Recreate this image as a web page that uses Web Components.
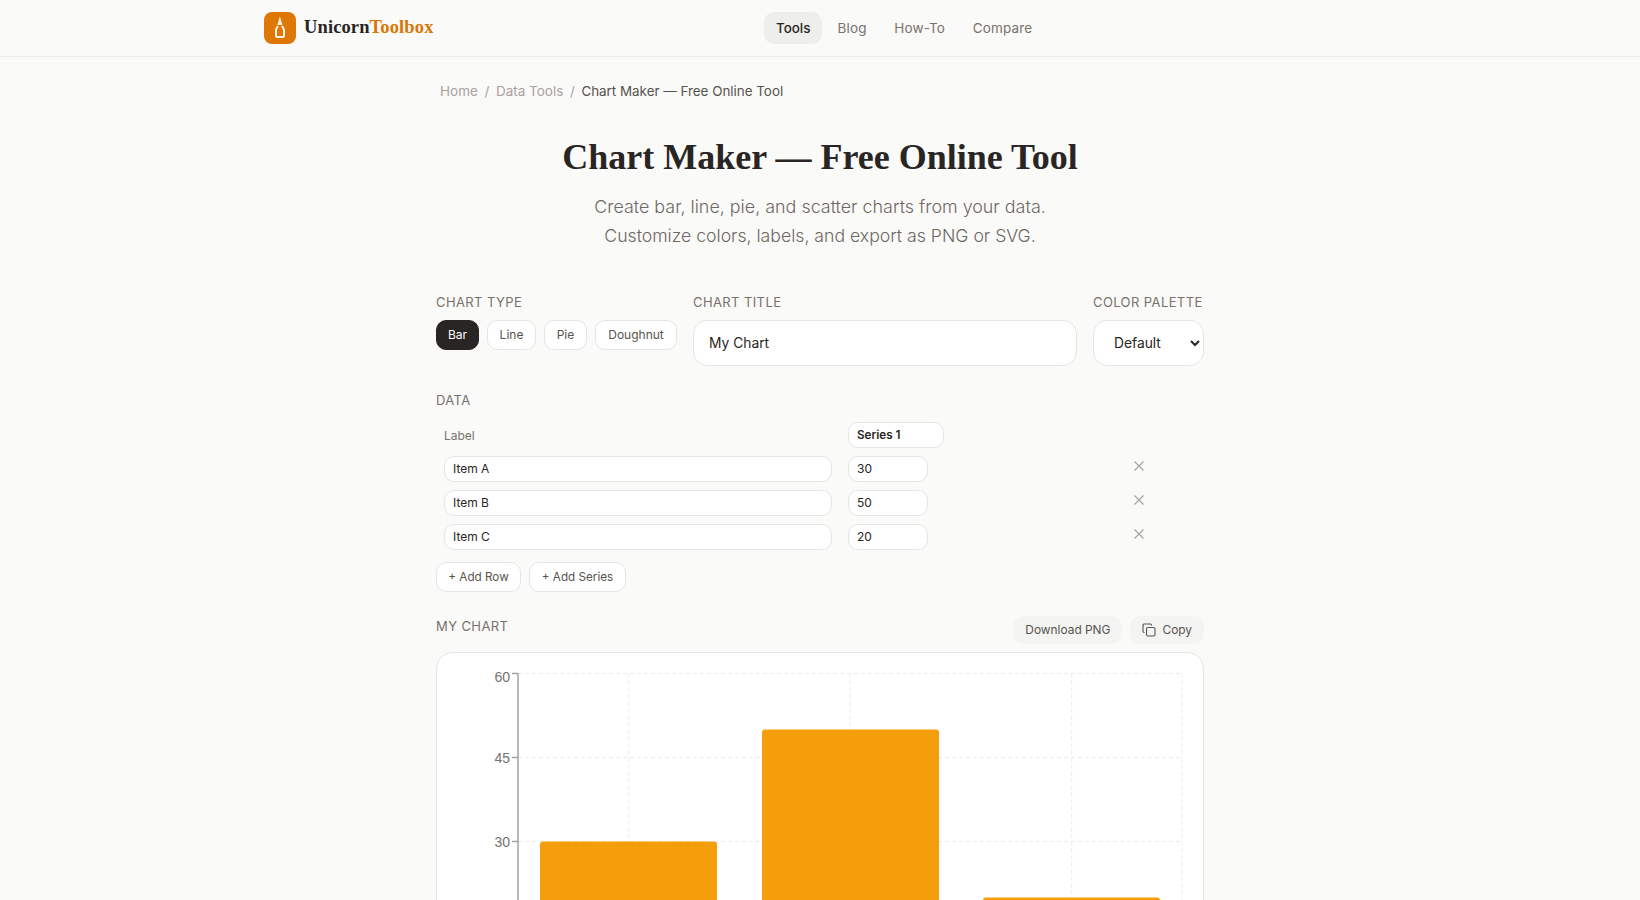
<!DOCTYPE html>
<html lang="en">
<head>
<meta charset="utf-8">
<title>Chart Maker</title>
<style>
  html, body { margin: 0; padding: 0; background: #fafaf9; }
  body { font-family: Inter, "Liberation Sans", sans-serif; color: #292524; }
</style>
</head>
<body>
<site-header></site-header>
<page-main>
  <bread-crumb></bread-crumb>
  <tool-hero>
    <span slot="title">Chart Maker — Free Online Tool</span>
    <span slot="line1">Create bar, line, pie, and scatter charts from your data.</span>
    <span slot="line2" style="font-size:17.65px">Customize colors, labels, and export as PNG or SVG.</span>
  </tool-hero>
  <chart-controls></chart-controls>
  <data-table></data-table>
  <chart-panel></chart-panel>
</page-main>

<script>
class SiteHeader extends HTMLElement {
    constructor() {
        super();
        const shadow = this.attachShadow({ mode: 'open' });
        shadow.innerHTML = `
            <style>
                :host { display: block; border-bottom: 1px solid #eeeeec; }
                .inner { display: flex; align-items: center; height: 56px; padding-left: 264px; }
                .logo { display: flex; align-items: center; gap: 8px; width: 164px; flex: none; }
                .mark { width: 32px; height: 32px; flex: none; display: block; }
                .name { font: 700 18.5px/22px "Liberation Serif", serif; letter-spacing: .12px; color: #292524; white-space: nowrap; padding-bottom: 3px; }
                .name b { color: #d97706; font-weight: 700; }
                nav { display: flex; gap: 3.6px; margin-left: 336px; }
                a { display: block; padding: 0 12px; height: 32px; line-height: 32px; border-radius: 10px; font-size: 13.5px; letter-spacing: .15px; color: #78716c; }
                a.on { width: 34px; background: #eeeeec; color: #292524; font-weight: 500; letter-spacing: 0; font-size: 13.4px; }
            </style>
            <div class="inner">
                <div class="logo">
                    <svg class="mark" viewBox="0 0 32 32">
                        <rect width="32" height="32" rx="8" fill="#dd7706"/>
                        <path d="M15.9 4.5 L18.5 13 H13.3 Z" fill="#fbeede"/>
                        <path d="M13.8 14 L12 17.6 V24 Q12 25 13 25 H19 Q20 25 20 24 V17.6 L18 14" fill="none" stroke="#fbeede" stroke-width="2"/>
                    </svg>
                    <span class="name">Unicorn<b>Toolbox</b></span>
                </div>
                <nav>
                    <a class="on">Tools</a><a>Blog</a><a>How-To</a><a>Compare</a>
                </nav>
            </div>
        `;
    }
}
customElements.define('site-header', SiteHeader);

class PageMain extends HTMLElement {
    constructor() {
        super();
        const shadow = this.attachShadow({ mode: 'open' });
        shadow.innerHTML = `
            <style>
                :host { display: block; width: 768px; margin: 0 auto; padding-top: 24px; }
            </style>
            <slot></slot>
        `;
    }
}
customElements.define('page-main', PageMain);

class BreadCrumb extends HTMLElement {
    constructor() {
        super();
        const shadow = this.attachShadow({ mode: 'open' });
        shadow.innerHTML = `
            <style>
                :host { display: flex; gap: 6.6px; padding-left: 4px; font-size: 13.5px; line-height: 20px; color: #a8a29e; }
                .now { color: #57534e; font-size: 13.4px; }
            </style>
            <span>Home</span><span>/</span><span>Data Tools</span><span>/</span><span class="now">Chart Maker — Free Online Tool</span>
        `;
    }
}
customElements.define('bread-crumb', BreadCrumb);

class ToolHero extends HTMLElement {
    constructor() {
        super();
        const shadow = this.attachShadow({ mode: 'open' });
        shadow.innerHTML = `
            <style>
                :host { display: block; text-align: center; margin-top: 34px; }
                h1 { margin: 0; font: 700 36px/44px "Liberation Serif", serif; color: #292524; }
                p { margin: 13px 0 0; font-size: 17.9px; line-height: 29px; font-weight: 300; color: #6f6863; }
            </style>
            <h1><slot name="title"></slot></h1>
            <p><slot name="line1"></slot><br><slot name="line2"></slot></p>
        `;
    }
}
customElements.define('tool-hero', ToolHero);

class ChartControls extends HTMLElement {
    constructor() {
        super();
        const shadow = this.attachShadow({ mode: 'open' });
        shadow.innerHTML = `
            <style>
                :host { display: grid; grid-template-columns: 241px 1fr 111px; column-gap: 16px; margin-top: 44px; }
                label { display: block; height: 16px; line-height: 16px; margin-bottom: 10px; font-size: 13px; letter-spacing: .4px; text-transform: uppercase; color: #78716c; white-space: nowrap; }
                .chips { display: grid; grid-template-columns: 43px 49px 43px 82px; gap: 8px; }
                button { height: 30px; padding: 0 0 1px; border: 1px solid #e7e5e4; border-radius: 10px; background: #fff; font: 400 12px Inter, sans-serif; color: #57534e; }
                button.on { background: #292524; border-color: #292524; color: #fff; }
                input, select { box-sizing: border-box; width: 100%; height: 46px; border: 1px solid #e7e5e4; border-radius: 14px; background: #fff; font: 400 13.8px Inter, sans-serif; color: #292524; outline: none; }
                input { padding: 0 16px 0 15px; }
                select { padding: 0 0 0 16px; }
            </style>
            <div><label>Chart Type</label>
                <div class="chips"><button class="on">Bar</button><button>Line</button><button>Pie</button><button>Doughnut</button></div>
            </div>
            <div><label>Chart Title</label><input value="My Chart"></div>
            <div><label>Color Palette</label><select><option>Default</option></select></div>
        `;
    }
}
customElements.define('chart-controls', ChartControls);

class DataTable extends HTMLElement {
    constructor() {
        super();
        const shadow = this.attachShadow({ mode: 'open' });
        const cross = `<svg class="x" width="10" height="10" viewBox="0 0 10 10"><path d="M.5.5l9 9M9.5.5l-9 9" stroke="#a8a29e" stroke-width="1.2" fill="none"/></svg>`;
        const rows = [['Item A', 30], ['Item B', 50], ['Item C', 20]].map(r => `
            <input value="${r[0]}"><input class="num" value="${r[1]}">${cross}
        `).join('');
        shadow.innerHTML = `
            <style>
                :host { display: block; margin-top: 26px; }
                .title { height: 16px; line-height: 16px; font-size: 13px; letter-spacing: .4px; color: #78716c; }
                .grid { display: grid; grid-template-columns: 388px 96px 1fr; gap: 8px 16px; align-items: center; padding: 14px 8px 0; }
                .head { font-size: 12px; color: #78716c; }
                input { box-sizing: border-box; width: 100%; height: 26px; padding: 0 8px 1px; border: 1px solid #e7e5e4; border-radius: 10px; background: #fff; font: 400 12px Inter, sans-serif; color: #292524; outline: none; }
                input.num { width: 80px; }
                input.series { padding-bottom: 0; font-weight: 600; font-size: 11.7px; }
                .x { justify-self: end; align-self: start; margin: 5px 52px 0 0; }
                .actions { display: grid; grid-template-columns: 85px 97px; gap: 8px; margin-top: 12px; }
                button { height: 30px; padding: 0; border: 1px solid #e7e5e4; border-radius: 10px; background: #fff; font: 400 11.7px Inter, sans-serif; color: #57534e; }
            </style>
            <div class="title">DATA</div>
            <div class="grid">
                <div class="head">Label</div><input class="series" value="Series 1"><span></span>
                ${rows}
            </div>
            <div class="actions"><button>+ Add Row</button><button>+ Add Series</button></div>
        `;
    }
}
customElements.define('data-table', DataTable);

class ChartPanel extends HTMLElement {
    constructor() {
        super();
        const shadow = this.attachShadow({ mode: 'open' });
        // plot coordinates are card-local: 60 sits on y=20.5, one unit is 5.6px
        const y = v => 20.5 + (60 - v) * 5.6;
        const grid = [60, 45, 30].map(v => `
            <path d="M81 ${y(v)}H745" class="g"/>
            <path d="M75 ${y(v)}H81" class="t"/>
        `).join('');
        const cols = [191.7, 413, 634.7, 745].map(x => `<path d="M${x} 20.5V330" class="g"/>`).join('');
        const bars = [[103, 30], [325, 50], [546, 20]].map(b => {
            const t = y(b[1]);
            return `<path d="M${b[0]} 330V${t + 3}q0-3 3-3H${b[0] + 174}q3 0 3 3V330Z" fill="#f59e0b"/>`;
        }).join('');
        shadow.innerHTML = `
            <style>
                :host { display: block; margin-top: 24px; }
                .bar { display: flex; align-items: flex-start; height: 28px; }
                .name { flex: 1; height: 20px; line-height: 20px; font-size: 13px; letter-spacing: .4px; color: #78716c; }
                button { display: flex; align-items: center; gap: 6px; height: 28px; margin-left: 8px; padding: 0 12px 1px; border: 0; border-radius: 10px; background: #f4f4f2; font: 400 11.9px Inter, sans-serif; color: #57534e; }
                .card { margin-top: 8px; height: 320px; border: 1px solid #e7e5e4; border-radius: 16px; background: #fff; overflow: hidden; }
                svg.plot { display: block; }
                .g { stroke: #ebebe9; stroke-width: 1; stroke-dasharray: 4 3; fill: none; }
                .t { stroke: #a8a29e; stroke-width: 1.5; fill: none; }
                text { font: 14px "Liberation Sans", sans-serif; fill: #78716c; }
            </style>
            <div class="bar">
                <div class="name">MY CHART</div>
                <button>Download PNG</button>
                <button><svg width="14" height="14" viewBox="0 0 14 14" fill="none" stroke="#57534e" stroke-width="1.1"><rect x="4.5" y="4.5" width="8.5" height="8.5" rx="1.5"/><path d="M2.5 9.5H2A1 1 0 0 1 1 8.5V2A1 1 0 0 1 2 1H8.5A1 1 0 0 1 9.5 2V2.5"/></svg>Copy</button>
            </div>
            <div class="card">
                <svg class="plot" width="766" height="320">
                    ${cols}${grid}${bars}
                    <path d="M81 20V330" stroke="#a8a29e" stroke-width="1.5"/>
                    <text x="73" y="29" text-anchor="end">60</text>
                    <text x="73" y="109.5" text-anchor="end">45</text>
                    <text x="73" y="193.5" text-anchor="end">30</text>
                </svg>
            </div>
        `;
    }
}
customElements.define('chart-panel', ChartPanel);
</script>
</body>
</html>
